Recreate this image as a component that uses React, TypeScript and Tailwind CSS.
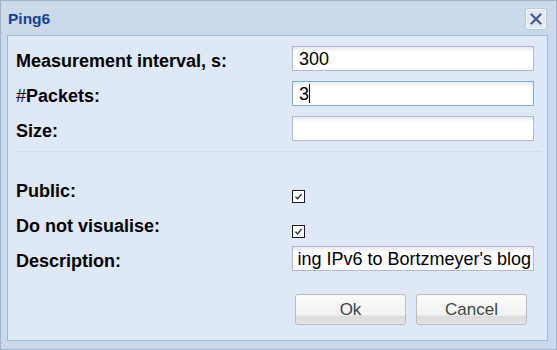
import React from "react";

const font = { fontFamily: '"Liberation Sans", Arial, sans-serif' };

const Field = ({ value, caret, focused }: { value?: string; caret?: boolean; focused?: boolean }) => (
    <div
        className={
            "w-[242px] h-[25px] flex items-center px-[6px] overflow-hidden whitespace-nowrap text-[18px] leading-none text-black bg-[linear-gradient(to_bottom,#e6e9ee,#ffffff_5px)] border " +
            (focused ? "border-[#7eadd9]" : "border-[#b5b8c8]")
        }
    >
        <span>{value}</span>
        {caret && <span className="inline-block w-px h-[19px] bg-black"></span>}
    </div>
);

const Check = () => (
    <div className="w-[13px] h-[13px] border border-[#1c1c1c] bg-white flex items-center justify-center mt-[14px] self-start">
        <svg width="9" height="9" viewBox="0 0 9 9">
            <path d="M1.5 4.8 L3.6 6.8 L7.5 2" fill="none" stroke="#222" strokeWidth="1.2" />
        </svg>
    </div>
);

const Row = ({ label, children }: { label: React.ReactNode; children: React.ReactNode }) => (
    <div className="flex h-[25px] items-center">
        <div className="w-[276px] pt-[4px] font-bold text-[18px] leading-none text-black">{label}</div>
        {children}
    </div>
);

export default function App() {
    return (
        <div style={font} className="w-[557px] h-[350px] bg-[#cbd9ea] border border-[#9fb2cc] flex flex-col">
            <div className="h-[34px] flex items-center justify-between pl-[7px] pr-[9px]">
                <span className="text-[15.5px] font-bold text-[#15428b] pt-[1px]">Ping6</span>
                <div className="w-[22px] h-[22px] rounded-[3px] border border-[#b9c9de] shadow-[inset_0_0_0_1px_#f4f8fc] bg-[#e2e9f4] flex items-center justify-center mt-[2px]">
                    <svg width="14" height="14" viewBox="0 0 14 14">
                        <path d="M2.5 2.5 L11.5 11.5 M11.5 2.5 L2.5 11.5" stroke="#4a5d8c" strokeWidth="2.4" strokeLinecap="round" />
                    </svg>
                </div>
            </div>
            <div className="flex-1 ml-[6px] mr-[8px] mb-[8px] bg-[#dfe8f6] border border-[#99bbe8] flex flex-col pl-[8px] pt-[10px]">
                <div className="flex flex-col gap-[10px]">
                    <Row label="Measurement interval, s:">
                        <Field value="300" />
                    </Row>
                    <Row label={<><span className="font-normal">#</span>Packets:</>}>
                        <Field value="3" caret focused />
                    </Row>
                    <Row label="Size:">
                        <Field />
                    </Row>
                </div>
                <div className="mt-[10px] mr-[6px] border-t border-[#d2deef]"></div>
                <div className="flex flex-col gap-[10px] mt-[24px]">
                    <Row label="Public:">
                        <Check />
                    </Row>
                    <Row label="Do not visualise:">
                        <Check />
                    </Row>
                    <Row label="Description:">
                        <div className="w-[242px] h-[25px] flex items-center justify-end px-[2px] overflow-hidden whitespace-nowrap text-[18px] leading-none text-black bg-[linear-gradient(to_bottom,#e6e9ee,#ffffff_5px)] border border-[#b5b8c8]">
                            ing IPv6 to Bortzmeyer's blog
                        </div>
                    </Row>
                </div>
                <div className="flex justify-end gap-[10px] pr-[20px] mt-[23px]">
                    {["Ok", "Cancel"].map((t) => (
                        <button
                            key={t}
                            className="w-[111px] h-[31px] rounded-[3px] border border-[#bcbcbc] text-[17px] text-[#444] bg-[linear-gradient(to_bottom,#fbfbfb,#f1f1f1_70%,#dcdcdc_72%,#e4e4e4)]"
                        >
                            {t}
                        </button>
                    ))}
                </div>
            </div>
        </div>
    );
}
